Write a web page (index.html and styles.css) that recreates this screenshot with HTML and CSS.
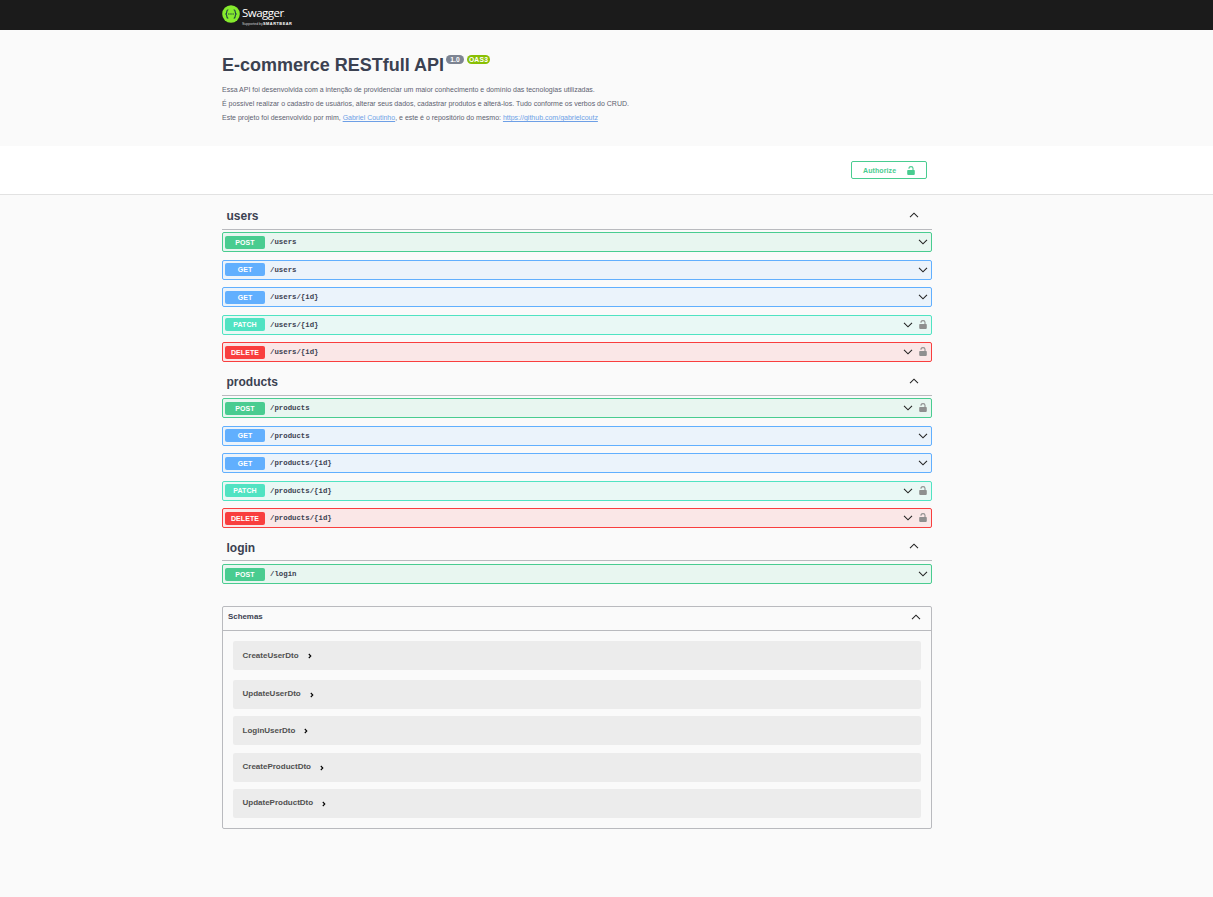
FILE: index.html
```html
<!DOCTYPE html>
<html lang="pt-BR">
<head>
<meta charset="utf-8">
<title>Swagger UI</title>
<link rel="stylesheet" href="styles.css">
</head>
<body>
<svg class="defs" width="0" height="0" aria-hidden="true">
  <symbol id="down" viewBox="0 0 10 6"><path d="M1 .8 5 4.8 9 .8" fill="none" stroke="currentColor" stroke-width="1.05"/></symbol>
  <symbol id="up" viewBox="0 0 10 6"><path d="M1 5.2 5 1.2 9 5.2" fill="none" stroke="currentColor" stroke-width="1.05"/></symbol>
  <symbol id="right" viewBox="0 0 4 6"><path d="M.8 1 2.800 3 .8 5" fill="none" stroke="currentColor" stroke-width="1.1"/></symbol>
  <symbol id="lock" viewBox="0 0 8 9"><path d="M2 2.700V2.200C2 1.200 2.800.6 4 .6s2 .7 2 1.700V4.500" fill="none" stroke="currentColor" stroke-width="1.1"/><rect x=".2" y="3.900" width="7.600" height="5" rx=".8" fill="currentColor"/></symbol>
</svg>

<header class="topbar">
  <div class="wrap brand">
    <svg class="mark" viewBox="0 0 18 18"><circle cx="9" cy="9" r="8.8" fill="#85ea2d"/><path d="M6.3 4.7c-1.5 0-1.5.6-1.5 2 0 1.500-.2 2.100-1.300 2.300 1.100.2 1.300.8 1.300 2.300 0 1.400 0 2 1.500 2M11.700 4.700c1.500 0 1.500.6 1.500 2 0 1.500.2 2.100 1.300 2.300-1.100.2-1.300.8-1.300 2.300 0 1.400 0 2-1.500 2" fill="none" stroke="#173647" stroke-width="1.1"/><g fill="#173647"><circle cx="6.900" cy="9" r=".65"/><circle cx="9" cy="9" r=".65"/><circle cx="11.100" cy="9" r=".65"/></g></svg>
    <div class="wordmark">
      <span class="name">Swagger<i>.</i></span>
      <span class="by"><span>Supported by</span> <b>SMARTBEAR</b></span>
    </div>
  </div>
</header>

<section class="info">
  <div class="wrap">
    <h1 class="title"><span class="title-text">E-commerce RESTfull API</span><span class="badge">1.0</span><span class="badge oas">OAS3</span></h1>
    <p class="p1">Essa API foi desenvolvida com a intenção de providenciar um maior conhecimento e domínio das tecnologias utilizadas.</p>
    <p class="p2">É possível realizar o cadastro de usuários, alterar seus dados, cadastrar produtos e alterá-los. Tudo conforme os verbos do CRUD.</p>
    <p class="p3">Este projeto foi desenvolvido por mim, <a href="#">Gabriel Coutinho</a>, e este é o repositório do mesmo: <a href="#">https://github.com/gabrielcoutz</a></p>
  </div>
</section>

<section class="scheme">
  <div class="wrap scheme-row">
    <button class="authorize"><span>Authorize</span><svg class="lock"><use href="#lock"/></svg></button>
  </div>
</section>

<main class="wrap">
  <section class="tag">
    <h2 class="tag-head"><span>users</span><svg class="chev"><use href="#up"/></svg></h2>
    <div class="ops">
      <div class="op post"><b class="method">POST</b><code>/users</code><svg class="chev"><use href="#down"/></svg></div>
      <div class="op get"><b class="method">GET</b><code>/users</code><svg class="chev"><use href="#down"/></svg></div>
      <div class="op get"><b class="method">GET</b><code>/users/{id}</code><svg class="chev"><use href="#down"/></svg></div>
      <div class="op patch"><b class="method">PATCH</b><code>/users/{id}</code><svg class="chev"><use href="#down"/></svg><svg class="lock"><use href="#lock"/></svg></div>
      <div class="op delete"><b class="method">DELETE</b><code>/users/{id}</code><svg class="chev"><use href="#down"/></svg><svg class="lock"><use href="#lock"/></svg></div>
    </div>
  </section>
  <section class="tag">
    <h2 class="tag-head products"><span>products</span><svg class="chev"><use href="#up"/></svg></h2>
    <div class="ops">
      <div class="op post"><b class="method">POST</b><code>/products</code><svg class="chev"><use href="#down"/></svg><svg class="lock"><use href="#lock"/></svg></div>
      <div class="op get"><b class="method">GET</b><code>/products</code><svg class="chev"><use href="#down"/></svg></div>
      <div class="op get"><b class="method">GET</b><code>/products/{id}</code><svg class="chev"><use href="#down"/></svg></div>
      <div class="op patch"><b class="method">PATCH</b><code>/products/{id}</code><svg class="chev"><use href="#down"/></svg><svg class="lock"><use href="#lock"/></svg></div>
      <div class="op delete"><b class="method">DELETE</b><code>/products/{id}</code><svg class="chev"><use href="#down"/></svg><svg class="lock"><use href="#lock"/></svg></div>
    </div>
  </section>
  <section class="tag last">
    <h2 class="tag-head login"><span>login</span><svg class="chev"><use href="#up"/></svg></h2>
    <div class="ops">
      <div class="op post"><b class="method">POST</b><code>/login</code><svg class="chev"><use href="#down"/></svg></div>
    </div>
  </section>

  <section class="models">
    <h3 class="models-head"><span>Schemas</span><svg class="chev"><use href="#up"/></svg></h3>
    <div class="models-list">
      <div class="model first"><span>CreateUserDto</span><svg class="arrow"><use href="#right"/></svg></div>
      <div class="model"><span>UpdateUserDto</span><svg class="arrow"><use href="#right"/></svg></div>
      <div class="model"><span>LoginUserDto</span><svg class="arrow"><use href="#right"/></svg></div>
      <div class="model"><span>CreateProductDto</span><svg class="arrow"><use href="#right"/></svg></div>
      <div class="model"><span>UpdateProductDto</span><svg class="arrow"><use href="#right"/></svg></div>
    </div>
  </section>
</main>
</body>
</html>
```
FILE: styles.css
```css
* { box-sizing: border-box; }
body { margin: 0; min-height: 897px; background: #fafafa; color: #3b4151; font-family: "Liberation Sans", Arial, sans-serif; }
.defs { position: absolute; }
svg { display: block; flex: none; }
.wrap { width: 710px; margin-left: 222px; }
h1, h2, h3, p { margin: 0; }

.topbar { height: 30px; background: #1b1b1b; }
.brand { display: flex; padding-top: 5px; color: #fff; }
.mark { width: 18px; height: 18px; }
.wordmark { display: flex; flex-direction: column; padding-left: 2px; }
.name { font: 11.5px/16px "Open Sans", sans-serif; letter-spacing: -.5px; }
.name i { font-size: 6px; color: #888; }
.by { display: flex; align-items: center; gap: 1px; margin-top: -1px; font-size: 3.6px; line-height: 4px; white-space: nowrap; color: #ccc; }
.by span { width: 20px; letter-spacing: -.05px; }
.by b { color: #fff; letter-spacing: .5px; font-size: 3.9px; }

.info { height: 116px; padding-top: 24px; }
.title { display: flex; height: 22px; font-size: 18px; line-height: 22px; white-space: nowrap; }
.title-text { width: 224px; letter-spacing: -.02px; }
.badge { width: 18px; height: 9px; margin-top: 1px; border-radius: 5px; background: #7d8492; color: #fff; font-size: 6.7px; line-height: 9px; text-align: center; }
.badge.oas { width: 23px; margin-left: 3px; background: #89bf04; letter-spacing: .25px; }
.info p { width: max-content; height: 14px; font-size: 7px; line-height: 14px; white-space: nowrap; color: #5c6170; }
.info .p1 { margin-top: 7px; }
.info a { color: #6d9fe6; }

.scheme { height: 49px; padding-top: 15px; background: #fff; border-bottom: 1px solid #e2e2e2; }
.scheme-row { display: flex; justify-content: flex-end; padding-right: 5px; }
.authorize { display: flex; align-items: center; justify-content: space-between; width: 76px; height: 18px; padding: 0 11px 0 11px; border: 1px solid #49cc90; border-radius: 2px; background: #fff; color: #49cc90; font: bold 7px/16px "Liberation Sans", Arial, sans-serif; letter-spacing: .1px; }
.authorize span { padding-top: 1px; }
.authorize .lock { width: 8px; height: 9px; }

.chev { width: 10px; height: 6px; color: #222; }
.tag-head { display: flex; align-items: center; justify-content: space-between; height: 35px; padding: 7px 13px 0 4.500px; border-bottom: 1px solid #b9babe; font-size: 12px; line-height: 18px; }
.tag-head.products { height: 34px; }
.tag-head.login { height: 33px; }
.tag-head .chev { margin-bottom: 1px; }
.products .chev, .login .chev { margin-bottom: 3px; }
.ops { display: grid; gap: 7.5px; padding-top: 2px; }
.login + .ops { padding-top: 3px; }
.op { display: flex; align-items: center; height: 20px; padding: 0 3px 0 2px; border: 1px solid; border-radius: 2px; }
.op code { flex: 1; padding: 0 0 0 5px; color: #3b4151; font: bold 7.35px/12px "Liberation Mono", monospace; }
.op .lock { width: 8px; height: 9px; margin: 0 1px 1px 6px; color: #8f8f8f; }
.method { width: 40px; height: 13px; border-radius: 2px; color: #fff; font-size: 7px; line-height: 13px; text-align: center; letter-spacing: .1px; }
.post { border-color: #49cc90; background: #e8f6f0; }
.post .method { background: #49cc90; }
.get { border-color: #61affe; background: #ebf3fb; }
.get .method { background: #61affe; }
.patch { border-color: #50e3c2; background: #e9f8f5; }
.patch .method { background: #50e3c2; }
.delete { border-color: #f93e3e; background: #fae7e7; }
.delete .method { background: #f93e3e; }

.models { height: 223px; margin-top: 22px; border: 1px solid #b9babe; border-radius: 2px; }
.models-head { display: flex; align-items: center; justify-content: space-between; height: 24px; padding: 0 10px 3px 5px; border-bottom: 1px solid #b9babe; font-size: 7.9px; line-height: 12px; }
.models-list { display: flex; flex-direction: column; gap: 7.4px; padding: 10px; }
.model { display: flex; align-items: center; gap: 9px; height: 29px; padding-left: 9.500px; border-radius: 2px; background: #ececec; font-size: 8px; font-weight: bold; color: #505050; }
.model.first { margin-bottom: 2.400px; }
.model span { padding-bottom: 1px; }
.arrow { width: 4px; height: 6px; margin-top: 1px; color: #000; }
```
